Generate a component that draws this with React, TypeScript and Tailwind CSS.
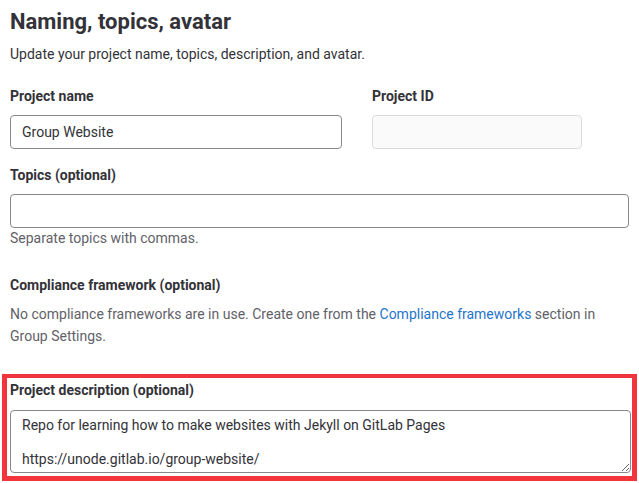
import React from "react";

const inputBase =
  "block h-[34px] w-full rounded-[4px] border px-[11px] text-[14px] text-[#333238] outline-none";

export default function App() {
  return (
    <div className="h-[483px] w-[639px] overflow-hidden bg-white px-[10px] text-[#333238] [font-family:Roboto,'Liberation_Sans',sans-serif]">
      <h2 className="mt-[8px] text-[22px] font-bold leading-[28px]">
        Naming, topics, avatar
      </h2>
      <p className="mt-[8px] text-[14px] leading-5 text-[#333238]">
        Update your project name, topics, description, and avatar.
      </p>

      <div className="mt-[22px] flex">
        <div className="w-[332px]">
          <label className="block text-[14px] font-bold leading-5">Project name</label>
          <input
            className={`${inputBase} mt-[9px] border-[#89888d]`}
            defaultValue="Group Website"
          />
        </div>
        <div className="ml-[30px] w-[210px]">
          <label className="block text-[14px] font-bold leading-5">Project ID</label>
          <input
            className={`${inputBase} mt-[9px] border-[#dcdcde] bg-[#fafafa]`}
            readOnly
          />
        </div>
      </div>

      <label className="mt-[16px] block text-[14px] font-bold leading-5">
        Topics (optional)
      </label>
      <input className={`${inputBase} mt-[9px] border-[#89888d]`} />
      <p className="text-[14px] leading-5 text-[#626168]">Separate topics with commas.</p>

      <label className="mt-[27px] block text-[14px] font-bold leading-5">
        Compliance framework (optional)
      </label>
      <p className="mt-[8px] pr-[30px] text-[14px] leading-[22px] text-[#626168]">
        No compliance frameworks are in use. Create one from the{" "}
        <a className="text-[#1f75cb]">Compliance frameworks</a> section in Group Settings.
      </p>

      <div className="-mx-[8px] mt-[27px] border-[5px] border-t-4 border-[#f2343c] pb-[3px] pl-[3px] pr-[1px] pt-[2px]">
        <label className="block text-[14px] font-bold leading-5">
          Project description (optional)
        </label>
        <textarea
          className="mt-[10px] block h-[63px] w-full rounded-[4px] border border-[#89888d] px-[11px] pt-[6px] text-[14px] leading-[17px] text-[#333238] outline-none"
          defaultValue={
            "Repo for learning how to make websites with Jekyll on GitLab Pages\n\nhttps://unode.gitlab.io/group-website/"
          }
        />
      </div>
    </div>
  );
}
